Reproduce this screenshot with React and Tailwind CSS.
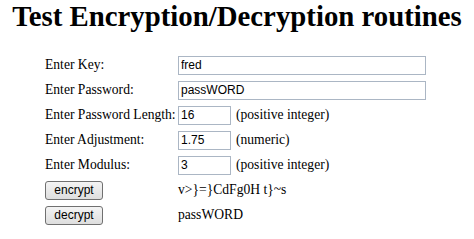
import React from 'react';

const serif = "font-['Liberation_Serif']";
const sans = "font-['Liberation_Sans']";

function Field({ value, wide }) {
  return (
    <input
      readOnly
      value={value}
      className={`${sans} ${wide ? 'w-[248px]' : 'w-[53px]'} h-[19px] border border-[#abb6c4] bg-white px-[2px] text-[12px] text-black outline-none`}
    />
  );
}

function Btn({ children }) {
  return (
    <button
      className={`${sans} w-[58px] h-[19px] rounded-[3px] border border-[#707070] bg-gradient-to-b from-[#f4f4f4] to-[#dedede] text-[12px] leading-none text-black`}
    >
      {children}
    </button>
  );
}

export default function App() {
  const rows = [
    { label: 'Enter Key:', value: 'fred', wide: true },
    { label: 'Enter Password:', value: 'passWORD', wide: true },
    { label: 'Enter Password Length:', value: '16', note: '(positive integer)' },
    { label: 'Enter Adjustment:', value: '1.75', note: '(numeric)' },
    { label: 'Enter Modulus:', value: '3', note: '(positive integer)' },
  ];

  return (
    <div className={`${serif} w-[474px] h-[239px] bg-white text-black overflow-hidden`}>
      <h1 className={`${serif} pt-[2px] text-center text-[28.8px] font-bold leading-none`}>
        Test Encryption/Decryption routines
      </h1>

      <div className={`${serif} mt-[22px] pl-[45px] text-[13.6px]`}>
        {rows.map((r) => (
          <div key={r.label} className="flex h-[25px] items-center">
            <div className="w-[133px] whitespace-nowrap">{r.label}</div>
            <Field value={r.value} wide={r.wide} />
            {r.note && <span className="ml-[5px]">{r.note}</span>}
          </div>
        ))}
        <div className="flex h-[25px] items-center">
          <div className="w-[133px]">
            <Btn>encrypt</Btn>
          </div>
          <span>v&gt;{'}'}={'}'}CdFg0H t{'}'}~s</span>
        </div>
        <div className="flex h-[25px] items-center">
          <div className="w-[133px]">
            <Btn>decrypt</Btn>
          </div>
          <span>passWORD</span>
        </div>
      </div>
    </div>
  );
}
